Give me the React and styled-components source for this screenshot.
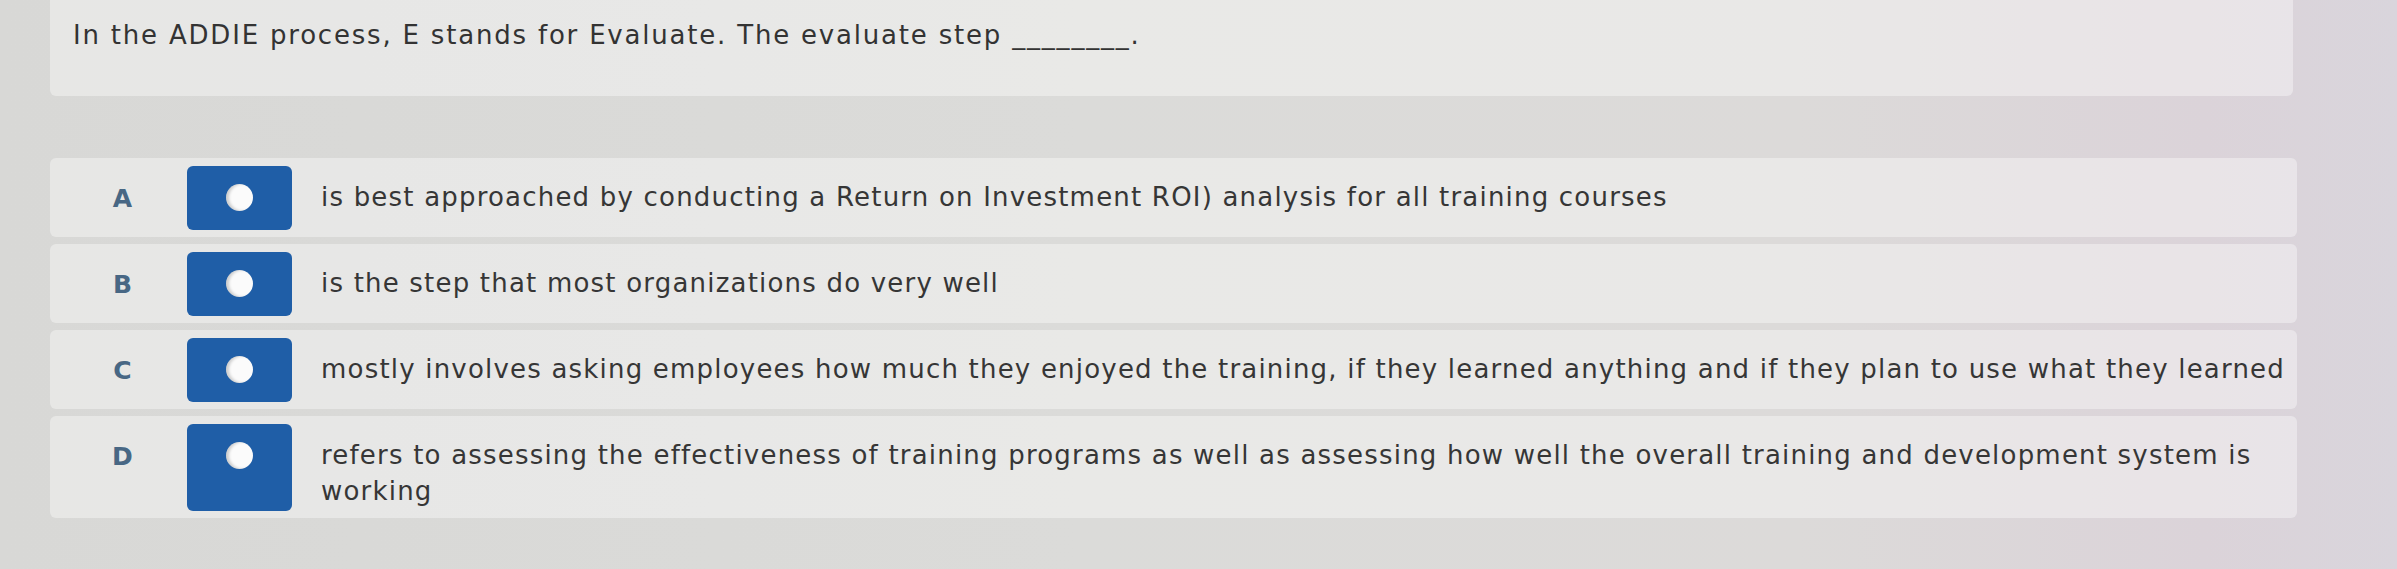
import React from "react";
import styled, { createGlobalStyle } from "styled-components";

const Global = createGlobalStyle`
  html, body { margin: 0; padding: 0; }
  body {
    width: 2397px;
    height: 569px;
    overflow: hidden;
    font-family: "DejaVu Sans", Verdana, sans-serif;
    background: linear-gradient(90deg, #d8d8d6 0%, #dbdbd9 45%, #dcdad9 75%, #dbd3d9 92%, #d9d5dc 100%);
  }
`;

const Page = styled.div`
  width: 2397px;
  height: 569px;
  box-sizing: border-box;
  padding: 0 100px 0 50px;
  display: flex;
  flex-direction: column;
  gap: 62px;
`;

const QuestionCard = styled.div`
  height: 96px;
  box-sizing: border-box;
  padding: 17px 23px 0;
  margin-right: 4px;
  background: rgba(255, 255, 255, 0.38);
  border-radius: 0 0 6px 6px;
`;

const QuestionText = styled.p`
  margin: 0;
  font-size: 26px;
  line-height: 36px;
  color: #333333;
  letter-spacing: 1.8px;
  white-space: nowrap;
`;

const Options = styled.div`
  display: flex;
  flex-direction: column;
  gap: 7px;
`;

const Row = styled.div`
  display: flex;
  align-items: stretch;
  padding: 8px 0 7px;
  min-height: 79px;
  box-sizing: border-box;
  background: rgba(255, 255, 255, 0.38);
  border-radius: 6px;
`;

const Letter = styled.div`
  width: 137px;
  box-sizing: border-box;
  padding: 18px 0 0 8px;
  text-align: center;
  font-weight: bold;
  font-size: 25px;
  line-height: 30px;
  color: #486784;
`;

const Choice = styled.div`
  width: 105px;
  flex: none;
  min-height: 63px;
  box-sizing: border-box;
  padding-top: 18px;
  display: flex;
  justify-content: center;
  align-items: flex-start;
  background: #1f5ea7;
  border-radius: 6px;
`;

const Dot = styled.span`
  width: 27px;
  height: 27px;
  border-radius: 50%;
  background: #fbfbfb;
  box-shadow: inset 3px 0 3px rgba(0, 0, 0, 0.18);
`;

const Answer = styled.div`
  flex: 1;
  padding: 13px 4px 2px 29px;
  font-size: 26px;
  line-height: 36px;
  color: #363636;
  letter-spacing: 1.2px;
`;

const options = [
  { key: "A", text: "is best approached by conducting a Return on Investment ROI) analysis for all training courses" },
  { key: "B", text: "is the step that most organizations do very well" },
  { key: "C", text: "mostly involves asking employees how much they enjoyed the training, if they learned anything and if they plan to use what they learned" },
  { key: "D", text: "refers to assessing the effectiveness of training programs as well as assessing how well the overall training and development system is working" },
];

export default function App() {
  return (
    <>
      <Global />
      <Page>
        <QuestionCard>
          <QuestionText>
            In the ADDIE process, E stands for Evaluate. The evaluate step ________.
          </QuestionText>
        </QuestionCard>
        <Options>
          {options.map((o) => (
            <Row key={o.key}>
              <Letter>{o.key}</Letter>
              <Choice>
                <Dot />
              </Choice>
              <Answer>{o.text}</Answer>
            </Row>
          ))}
        </Options>
      </Page>
    </>
  );
}
